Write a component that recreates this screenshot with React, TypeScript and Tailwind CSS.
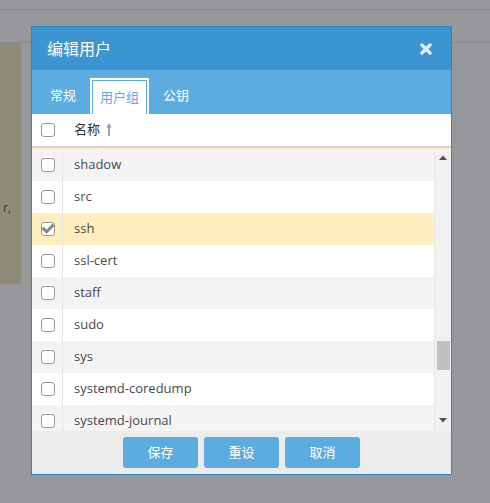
import React from 'react';

const GROUPS = [
  'shadow',
  'src',
  'ssh',
  'ssl-cert',
  'staff',
  'sudo',
  'sys',
  'systemd-coredump',
  'systemd-journal',
];

const FONT = "font-['Open_Sans','Noto_Sans_CJK_SC',sans-serif]";

function Checkbox({ checked }: { checked?: boolean }) {
  return (
    <span className="flex h-[14px] w-[14px] items-center justify-center rounded-[3px] border border-[#999] bg-white">
      {checked && (
        <svg width="12" height="12" viewBox="0 0 12 12">
          <path
            d="M1.6 5.8 L4.6 8.8 L10.6 2.6"
            fill="none"
            stroke="#858585"
            strokeWidth="2.8"
            strokeLinecap="square"
          />
        </svg>
      )}
    </span>
  );
}

function Row({ name, index }: { name: string; index: number }) {
  const checked = name === 'ssh';
  const bg = checked ? 'bg-[#ffefbe]' : index % 2 === 0 ? 'bg-[#f4f4f4]' : 'bg-white';
  return (
    <div className={`flex h-[32px] shrink-0 items-center ${bg}`}>
      <div className="flex h-full w-[31px] items-center justify-center border-r border-[#e6e6e6] pl-[1px]">
        <Checkbox checked={checked} />
      </div>
      <div className="pl-[11px] text-[13px] text-[#4a4a4a]">{name}</div>
    </div>
  );
}

export default function App() {
  return (
    <div className={`relative h-[503px] w-[490px] overflow-hidden bg-[#96989c] ${FONT}`}>
      {/* page behind the modal */}
      <div className="h-[9px]" />
      <div className="h-[1px] bg-[#898b8f]" />
      <div className="h-[32px]" />
      <div className="h-[1px] bg-[#88898d]" />
      <div className="h-[241px] w-[21px] bg-[#8f8b79] pl-[3px] pt-[157px] text-[12px] leading-[16px] text-[#333]">
        r,
      </div>

      {/* dialog */}
      <div className="absolute left-[31px] top-[26px] flex w-[421px] flex-col border border-[#2d85c6] bg-white">
        <div className="flex h-[43px] items-center justify-between bg-[#3c95d0] pl-[15px] pr-[19px]">
          <span className="text-[16px] text-white">编辑用户</span>
          <svg width="12" height="12" viewBox="0 0 12 12">
            <path
              d="M2 2 L10 10 M10 2 L2 10"
              stroke="#dcecf8"
              strokeWidth="3.4"
              strokeLinecap="round"
            />
          </svg>
        </div>

        <div className="flex h-[44px] items-end bg-[#5cacdf] pl-[18px] text-[13px]">
          <div className="flex h-[36px] items-center pr-[14px] text-white">常规</div>
          <div className="h-[36px] bg-white px-[2px] pt-[2px]">
            <div className="flex h-full items-center border-x border-t border-[#5cacdf] px-[7px] text-[#5cacdf]">
              用户组
            </div>
          </div>
          <div className="flex h-[36px] items-center pl-[14px] text-white">公钥</div>
        </div>

        {/* table header */}
        <div className="flex h-[34px] items-center border-b-2 border-[#d4d4d4]">
          <div className="flex w-[31px] justify-center pl-[1px]">
            <Checkbox />
          </div>
          <div className="flex items-center gap-[6px] pl-[11px] text-[13px] text-[#333]">
            名称
            <svg width="6" height="14" viewBox="0 0 6 14">
              <path d="M3 1 L3 13" stroke="#8494a2" strokeWidth="1.6" />
              <path d="M0.4 4.5 L3 1 L5.6 4.5 Z" fill="#8494a2" />
            </svg>
          </div>
        </div>

        {/* rows + scrollbar */}
        <div className="flex h-[283px] border-t border-[#fff0c4]">
          <div className="flex flex-1 flex-col overflow-hidden">
            {GROUPS.map((g, i) => (
              <Row key={g} name={g} index={i} />
            ))}
          </div>
          <div className="relative w-[17px] border-l border-[#e8e8e8] bg-[#f1f1f1]">
            <svg className="absolute left-[4px] top-[6px]" width="8" height="5" viewBox="0 0 8 5">
              <path d="M0 5 L4 0.5 L8 5 Z" fill="#505050" />
            </svg>
            <div className="absolute left-[2px] top-[192px] h-[29px] w-[13px] bg-[#c1c1c1]" />
            <svg className="absolute bottom-[8px] left-[4px]" width="8" height="5" viewBox="0 0 8 5">
              <path d="M0 0 L8 0 L4 4.5 Z" fill="#505050" />
            </svg>
          </div>
        </div>

        {/* footer */}
        <div className="flex h-[43px] justify-center gap-[6px] bg-[#ececec] pt-[6px]">
          {['保存', '重设', '取消'].map(label => (
            <button
              key={label}
              type="button"
              className="h-[31px] w-[75px] rounded-[3px] bg-[#5cacdf] text-[13px] text-white"
            >
              {label}
            </button>
          ))}
        </div>
      </div>
    </div>
  );
}
